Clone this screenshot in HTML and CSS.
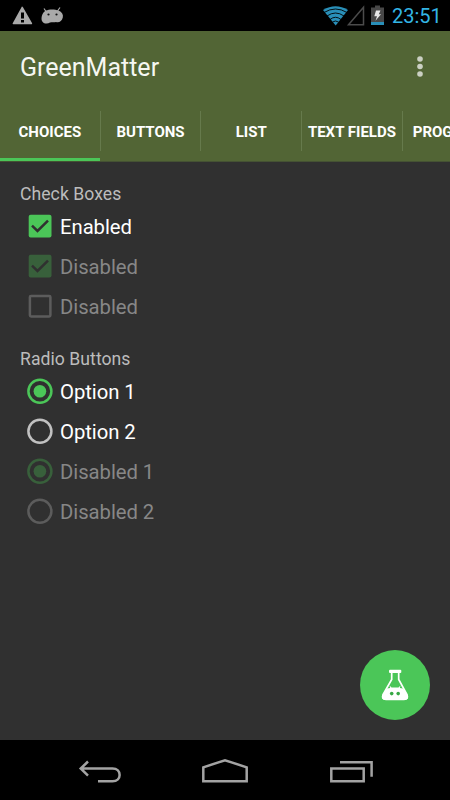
FILE: index.html
```html
<!DOCTYPE html>
<html lang="en">
<head>
<meta charset="utf-8">
<title>GreenMatter</title>
<link rel="stylesheet" href="styles.css">
</head>
<body>
<div class="screen">
  <div class="status">
    <svg class="status-left" width="70" height="31" viewBox="0 0 70 31">
      <path fill="#a9a9a9" fill-rule="evenodd" d="M22 6.500Q22.600 6.500 23 7.300L32 23Q32.600 24.300 31.500 24.300H13.400Q12.200 24.300 12.700 23.200L21.500 7.300Q21.700 6.500 22 6.500ZM21 12.500V18.500H24V12.500ZM21 20V22.500H24V20Z"/>
      <path fill="#a9a9a9" d="M46 10.500C49 9 55 9 58.500 10.500C62 12 63.500 14.500 62.800 17.500C62 21.500 59 22.700 56 22C53 22.500 52 22 50 22.500C47.500 24.500 43 23.700 42 21C41 18.500 41.500 13 46 10.500Z"/>
      <path stroke="#a9a9a9" stroke-width="1.200" d="M46 11.500L44 8.500M57.500 11L60 7.500"/>
      <circle cx="48.500" cy="14.500" r="1.100" fill="#111"/><circle cx="56.500" cy="14.500" r="1.100" fill="#111"/>
    </svg>
    <svg class="status-right" width="64" height="31" viewBox="0 0 64 31">
      <path fill="#298fb8" d="M0 10Q12.500 2.500 25 10L12.700 25.500Z"/>
      <g fill="none" stroke="#000" stroke-width=".9"><path d="M1 12.500Q12.500 5.500 24 12.500M4 16Q12.500 10 21 16M7 19.500Q12.500 15 18 19.500M9.500 22Q12.500 20 15.500 22"/></g>
      <path fill="none" stroke="#4b4b4b" stroke-width="1.500" d="M25.500 24.800L40.500 7.200V24.800Z"/>
      <path fill="#484848" d="M52 5.500h5v2h4V25H48V7.500h4Z"/>
      <path fill="#298fb8" d="M48 22h13v3H48Z"/>
      <path fill="#e8e8e8" d="M53 10.500H57.500L55.800 14.300H58L52.500 20.800L54 16.300H51.300Z"/>
    </svg>
    <span class="clock">23:51</span>
  </div>
  <header class="bar">
    <div class="title-row">
      <h1>GreenMatter</h1>
      <svg width="8" height="22" viewBox="0 0 8 22" fill="#cbd0c3"><circle cx="4" cy="3" r="2.800"/><circle cx="4" cy="10.500" r="2.800"/><circle cx="4" cy="18" r="2.800"/></svg>
    </div>
    <nav class="tabs">
      <div class="tab active"><span>CHOICES</span></div>
      <div class="tab"><span>BUTTONS</span></div>
      <div class="tab"><span>LIST</span></div>
      <div class="tab"><span>TEXT FIELDS</span></div>
      <div class="tab"><span class="wide">PROGRESS</span></div>
    </nav>
  </header>
  <main>
    <h2>Check Boxes</h2>
    <div class="row"><svg class="mark" viewBox="0 0 26 26"><rect x="1.700" y="1.700" width="22.800" height="22.800" rx="2" fill="#4bc658"/><path class="tick" d="M5 12.600L10.500 18L21 7.600"/></svg><span>Enabled</span></div>
    <div class="row off"><svg class="mark" viewBox="0 0 26 26"><rect x="1.700" y="1.700" width="22.800" height="22.800" rx="2" fill="#38603b"/><path class="tick" d="M5 12.600L10.500 18L21 7.600"/></svg><span>Disabled</span></div>
    <div class="row off"><svg class="mark" viewBox="0 0 26 26"><rect x="2.900" y="2.900" width="20.500" height="20.500" rx="1.200" class="ring dim"/></svg><span>Disabled</span></div>
    <h2 class="second">Radio Buttons</h2>
    <div class="row"><svg class="mark" viewBox="0 0 26 26"><circle cx="12.900" cy="13.200" r="11.500" class="ring green"/><circle cx="12.900" cy="13.200" r="6.300" fill="#4bc658"/></svg><span>Option 1</span></div>
    <div class="row"><svg class="mark" viewBox="0 0 26 26"><circle cx="12.900" cy="13.200" r="11.500" class="ring"/></svg><span>Option 2</span></div>
    <div class="row off"><svg class="mark" viewBox="0 0 26 26"><circle cx="12.900" cy="13.200" r="11.500" class="ring moss"/><circle cx="12.900" cy="13.200" r="6.300" fill="#38603b"/></svg><span>Disabled 1</span></div>
    <div class="row off"><svg class="mark" viewBox="0 0 26 26"><circle cx="12.900" cy="13.200" r="11.500" class="ring dim"/></svg><span>Disabled 2</span></div>
    <div class="fab">
      <svg width="70" height="70" viewBox="0 0 70 70">
        <rect x="29" y="19.800" width="12.300" height="3.200" rx="1" fill="#fff"/>
        <path d="M31.700 22.500V29.500L23 44.500Q21.500 49 26 49.300H44Q48.500 49 47 44.500L38.700 29.500V22.500" fill="none" stroke="#fff" stroke-width="1.700"/>
        <path fill="#fff" d="M27 38.500L30.200 38L29.500 35.500L31.500 37.500H38.500L40.500 35.500L39.800 38L43 38.500L47.500 45Q49.500 49.500 45 50H25Q20.500 49.500 22.500 45Z"/>
        <circle cx="31.700" cy="43.600" r="1.800" fill="#38a845"/><circle cx="38.200" cy="43.600" r="1.800" fill="#38a845"/>
      </svg>
    </div>
  </main>
  <footer class="nav">
    <svg width="450" height="60" viewBox="0 0 450 60" fill="none" stroke="#a3a3a3" stroke-width="2.500">
      <path d="M88 21.500L80.700 28.500L88 35.700M81 28.500H112.500C122 28.500 122 41.300 112.500 41.300H98"/>
      <path d="M203.300 41.300V27.300L225 20.200L246.700 27.300V41.300Z"/>
      <path d="M331.300 28.400H363.700V41.300H331.300ZM340 22.300H371.600V36.800"/>
    </svg>
  </footer>
</div>
</body>
</html>
```
FILE: styles.css
```css
* { box-sizing: border-box; }
body { margin: 0; background: #000; font-family: Roboto, sans-serif; }
.screen { width: 450px; height: 800px; display: flex; flex-direction: column; overflow: hidden; }
.status { height: 31px; background: #000; display: flex; align-items: center; }
.status-right { margin-left: 253px; }
.clock { color: #33b5e5; font-size: 20px; line-height: 31px; margin-left: 5px; padding-top: 1px; }
.bar { height: 131px; background: #526535; display: flex; flex-direction: column; }
.title-row { height: 72px; padding: 0 26px 0 20px; display: flex; align-items: center; justify-content: space-between; }
h1 { margin: 0; padding-top: 1px; color: #f5f7f2; font-size: 25px; font-weight: 400; line-height: 31px; }
.tabs { height: 59px; display: flex; border-bottom: 1px solid #455233; overflow: hidden; }
.tab { flex: 0 0 100.700px; height: 58px; padding-top: 8px; }
.tab span { display: block; height: 40px; line-height: 42px; text-align: center; color: #fff; font-size: 15px; font-weight: 700; white-space: nowrap; border-right: 1px solid #667a4c; }
.tab.active { background: linear-gradient(#4bc658, #4bc658) left bottom / 100px 3px no-repeat; }
.tab .wide { text-align: left; padding-left: 10px; border: 0; }
main { height: 578px; background: #303030; padding: 20px 20px 0; position: relative; }
h2 { margin: 0; color: #bcbcbc; font-size: 17.600px; letter-spacing: 0.050px; font-weight: 400; line-height: 24px; }
h2.second { margin-top: 21px; }
.row { height: 40px; padding-left: 7px; display: flex; align-items: center; color: #fff; font-size: 20.300px; letter-spacing: -0.050px; }
.row span { padding-top: 1px; }
.mark { width: 26px; height: 26px; margin-right: 7px; }
.off { color: #878787; }
.tick { fill: none; stroke: #303030; stroke-width: 2.500; }
.ring { fill: none; stroke: #c1c1c1; stroke-width: 2.500; }
.green { stroke: #4bc658; }
.moss { stroke: #38603b; }
.dim { stroke: #5c5c5c; }
.fab { position: absolute; right: 20px; bottom: 20px; width: 70px; height: 70px; border-radius: 50%; background: #4bc658; }
.nav { height: 60px; background: #000; }
.nav svg { display: block; }
```
